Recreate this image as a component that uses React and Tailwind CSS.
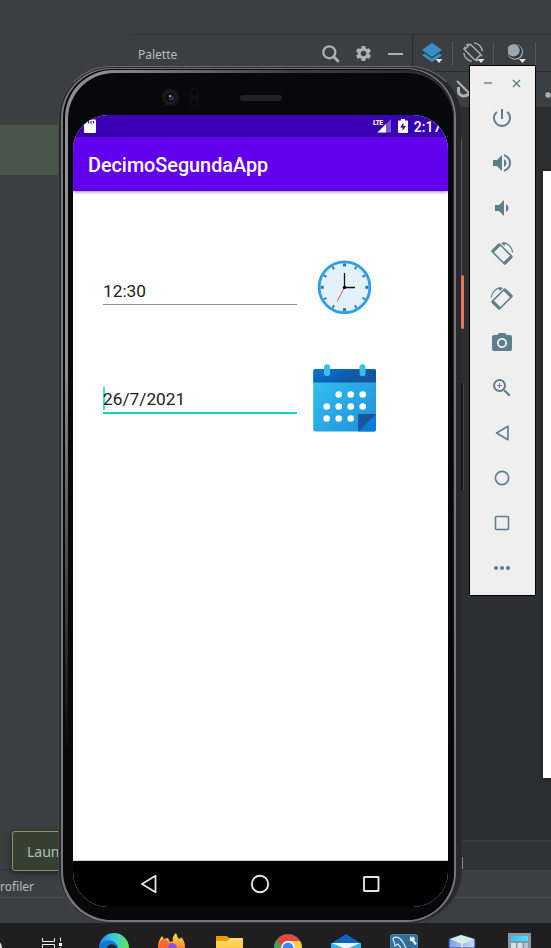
import { MdPowerSettingsNew, MdVolumeUp, MdVolumeDown, MdLocalSee, MdZoomIn, MdSettings } from "react-icons/md";

function Layers() {
  return (
    <svg width="24" height="24" viewBox="0 0 24 24">
      <path d="M10 1 20 8 10 15 0 8Z" fill="#3592c4" />
      <path d="M0 13 2.5 11.4 10 16.5 17.5 11.4 20 13 10 20Z" fill="#3592c4" />
      <path d="M13.5 17h7l-3.5 4z" fill="#e0e0e0" />
    </svg>
  );
}

function Rotate() {
  return (
    <svg width="22" height="24" viewBox="0 0 22 24" fill="none" stroke="#afb1b3" strokeWidth="1.4">
      <rect x="5.6" y="2.6" width="8" height="15" rx="1" transform="rotate(-45 9.6 10.1)" />
      <path d="M11 .9a9.4 9.4 0 0 1 8.4 8.2M.8 11a9.4 9.4 0 0 0 8 8.4" />
      <path d="M.8 7.6A9.5 9.5 0 0 1 6.5 1.4M12.7 19a9.5 9.5 0 0 0 3.3-2M18.8 12.6l-.8 1.8" strokeDasharray="3 1.5" />
      <path d="M14.5 17h7L18 21z" fill="#e0e0e0" stroke="none" />
    </svg>
  );
}

function Moon() {
  return (
    <svg width="22" height="24" viewBox="0 0 22 24">
      <circle cx="7.300" cy="10" r="7.800" fill="#9aa7b0" />
      <circle cx="6.800" cy="9.500" r="7" fill="#2f3335" />
      <circle cx="5.500" cy="8.400" r="6.200" fill="#9aa7b0" />
      <path d="M11 17h7l-3.500 4z" fill="#e0e0e0" />
    </svg>
  );
}

function Ide() {
  return (
    <div className="flex h-[923px] flex-col bg-[#3c3f41] font-['Noto_Sans','Open_Sans',sans-serif] text-xs text-[#bbbbbb]">
      <div className="flex h-[869px]">
        <div className="w-[132px] pt-[125px]">
          <div className="h-[50px] bg-[#49544a]" />
        </div>
        <div className="flex flex-1 flex-col pt-[34px]">
          <div className="flex h-[37px] border-t border-[#323232]">
            <div className="flex w-[280px] items-center pl-[6px] pt-px">
              <span className="w-[184px] pt-[2px]">Palette</span>
              <svg width="18" height="18" viewBox="0 0 18 18" fill="none" stroke="#afb1b3">
                <circle cx="7.300" cy="7.300" r="6" strokeWidth="2.300" />
                <path d="m11.500 11.500 5.200 5.200" strokeWidth="2.800" />
              </svg>
              <MdSettings className="ml-[14px] size-[19px] text-[#afb1b3]" />
              <div className="ml-[15px] h-[2px] w-[15px] bg-[#afb1b3]" />
            </div>
            <div className="flex flex-1 border-l border-[#2b2b2b] pl-[9px] pt-[7px]">
              <Layers />
              <div className="ml-[6px] h-6 w-px bg-[#555759]" />
              <div className="ml-[10px]"><Rotate /></div>
              <div className="ml-[8px] h-6 w-px bg-[#555759]" />
              <div className="ml-[14px]"><Moon /></div>
              <div className="ml-[5px] h-6 w-px bg-[#555759]" />
            </div>
          </div>
          <div className="flex flex-1">
            <div className="w-[280px]" />
            <div className="flex flex-1 flex-col border-l border-[#2b2b2b]">
              <div className="flex h-[37px] items-center justify-between border-b border-t border-[#2b2b2b] pl-[43px]">
                <svg width="18" height="20" viewBox="0 0 18 20" fill="none" stroke="#afb1b3">
                  <path d="M2.500 7v4c0 6.500 10 6.500 12 0V7" strokeWidth="3" />
                  <path d="M1 1l13 13" strokeWidth="2" />
                </svg>
                <svg width="6" height="16" viewBox="0 0 6 16"><circle cx="3" cy="13" r="2.700" fill="#afb1b3" /></svg>
              </div>
              <div className="flex h-[732px] justify-end bg-[#2d2e30] pt-[63px]">
                <div className="h-[607px] w-2 bg-white shadow-[0_0_3px_2px_#252628]" />
              </div>
              <div className="flex-1 border-t-2 border-[#3a3b3d] bg-[#313234]" />
            </div>
          </div>
        </div>
      </div>
      <div className="flex h-[29px] border-y border-t-[#323232] border-b-[#4b4d4f] pb-[2px] pt-2">
        <span className="leading-[18px]">rofiler</span>
      </div>
    </div>
  );
}

function Taskbar() {
  return (
    <div className="flex h-[25px] items-end overflow-hidden bg-[#1f1f1f]">
      <svg width="34" height="25" viewBox="0 0 34 25">
        <circle cx="-7" cy="25" r="9" fill="#ddd" />
      </svg>
      <svg width="42" height="25" viewBox="34 0 42 25" fill="none" stroke="#eee">
        <path d="M42.500 15v3.500h12V15M42.500 25v-3.500h12V25M60.500 14.500v4M60.500 24v1" />
        <path d="M59 20h3v3h-3z" fill="#fff" stroke="none" />
      </svg>
      <svg width="475" height="25" viewBox="76 0 475 25">
        <defs>
          <linearGradient id="edge"><stop stopColor="#1689dc" /><stop offset=".45" stopColor="#36c5e8" /><stop offset="1" stopColor="#66e84f" /></linearGradient>
          <linearGradient id="fox" x2="0" y2="1"><stop stopColor="#ffe14a" /><stop offset="1" stopColor="#ff8b2c" /></linearGradient>
          <linearGradient id="folder" x2="0" y2="1"><stop stopColor="#ffdb72" /><stop offset="1" stopColor="#ffcb45" /></linearGradient>
          <linearGradient id="cube"><stop stopColor="#7ea3dc" /><stop offset="1" stopColor="#ccd9f5" /></linearGradient>
          <linearGradient id="calc"><stop stopColor="#35c6ff" /><stop offset="1" stopColor="#50dcff" /></linearGradient>
        </defs>
        <circle cx="114" cy="25" r="15" fill="url(#edge)" />
        <path d="M99 25c2-9 15-11 19-1v1z" fill="#0f79d2" />
        <path d="M107 25c1-5 8-5 10 0z" fill="#16243a" />
        <path d="M158 25c0-5 1-8 4-12l2 3 4-1 2 4 3-1c-1-3 0-5 3-8l2 5 2 1 1-2c3 3 4 6 4 11z" fill="url(#fox)" />
        <path d="M158 25c1-5 3-9 6-9l6 4-3 5z" fill="#ff6537" />
        <path d="M168 25c0-7 8-6 9 0z" fill="#8f49ed" />
        <path d="M216 13h11l2 2h14v10h-27z" fill="#e6a100" />
        <path d="M216 18h11l3-3h13v10h-27z" fill="url(#folder)" />
        <circle cx="288" cy="25" r="14" fill="#db4b3f" />
        <path d="M274 25c0-3 1-6 3-8l5 8z" fill="#36a852" />
        <path d="M286 18h14c1 2 2 4 2 7h-10z" fill="#ffcd42" />
        <circle cx="288" cy="25" r="7" fill="#fff" />
        <circle cx="288" cy="25" r="5.500" fill="#4285f4" />
        <path d="M331 20.500 346 11l15 9.500V25h-30z" fill="#0f65bd" />
        <path d="M331 20h30v5h-30z" fill="#32b4ee" />
        <path d="M332 20h28l-11 5h-6z" fill="#f3f6f9" />
        <rect x="390.500" y="11.500" width="27" height="18" rx="2" fill="#326f98" stroke="#4380a8" />
        <path d="M393 15c6-3 10 3 13 10M393 15c0 4 2 4 2 8l3-2 3 4" fill="none" stroke="#d9eef8" strokeWidth="1.200" />
        <path d="m410 13 2 2 1-2 2 3-1 1 3 4-2 1-3-4-2 0z" fill="#e8f4fa" />
        <path d="m449 16 12-4 14 4v9h-26z" fill="url(#cube)" stroke="#283c9b" strokeWidth="1.200" />
        <path d="m450 16 11-4 13 4-12 5z" fill="#d7ece4" />
        <path d="M462 21v4" stroke="#f3f9ff" />
        <path d="M508 10h23v15h-23z" fill="#8997a3" />
        <path d="M511 13h17v5h-17z" fill="url(#calc)" />
        <path d="M511 20h5v5h-5zM517.500 20h5v5h-5z" fill="#d5dfe6" />
        <path d="M524 20h4v5h-4z" fill="#b3c2cc" />
      </svg>
    </div>
  );
}

function Clock() {
  const ticks = [0, 30, 60, 90, 120, 150, 180, 210, 240, 270, 300, 330];
  return (
    <svg width="54" height="54" viewBox="0 0 54 54">
      <circle cx="27.500" cy="27.300" r="25.400" fill="#e3f1fd" stroke="#2e9fe6" strokeWidth="2.800" />
      {ticks.map((a) => (
        <path key={a} d="M27.500 3.500v3" stroke="#2979ad" strokeWidth={a % 90 ? 1.8 : 3} transform={`rotate(${a} 27.5 27.3)`} />
      ))}
      <path d="M27.500 27.300 20 41.500" stroke="#d9534f" strokeWidth="1" />
      <path d="M27.500 13v14.500H38" fill="none" stroke="#111" strokeWidth="1.300" />
      <circle cx="27.500" cy="27.400" r="1.700" fill="#000" />
    </svg>
  );
}

function Calendar() {
  const dots = [[26, 31], [38, 31], [50, 31], [14, 43], [26, 43], [38, 43], [50, 43], [14, 55], [26, 55], [38, 55]];
  return (
    <svg width="64" height="68" viewBox="0 0.5 64 68">
      <defs>
        <linearGradient id="calBody" x2="1" y2="1"><stop stopColor="#36c4f3" /><stop offset="1" stopColor="#1d8fd9" /></linearGradient>
        <linearGradient id="calTop" x2="1" y2=".4"><stop stopColor="#0676cf" /><stop offset=".6" stopColor="#0c5eae" /><stop offset="1" stopColor="#19559a" /></linearGradient>
      </defs>
      <rect x=".200" y="5.500" width="62.800" height="62.500" rx="2" fill="url(#calBody)" />
      <path d="M.200 19V7.500a2 2 0 0 1 2-2H61a2 2 0 0 1 2 2V19z" fill="url(#calTop)" />
      <rect x="11" y=".700" width="6" height="12" rx="3" fill="#35bff0" />
      <rect x="46.500" y=".700" width="6" height="12" rx="3" fill="#35bff0" />
      {dots.map(([x, y]) => <circle key={`${x}-${y}`} cx={x - 0.3} cy={y} r="3.300" fill="#fff" />)}
      <path d="M45.300 50.500H63V66a2 2 0 0 1-2 2H45.300z" fill="#0c7bd8" />
      <path d="M45.300 50.500H63L45.300 68z" fill="#17559a" />
    </svg>
  );
}

function StatusBar() {
  return (
    <div className="flex h-[22px] items-center bg-[#3a00b3] pl-[11px] text-white">
      <svg width="12" height="14" viewBox="0 0 12 14">
        <path d="M4 .500h7a1 1 0 0 1 1 1V13a1 1 0 0 1-1 1H1a1 1 0 0 1-1-1V4.500z" fill="#fff" />
        <path d="M4.500 2v2.500M7 2v2.500M9.500 2v2.500" stroke="#3a00b3" strokeWidth="1.200" />
      </svg>
      <span className="ml-[277px] self-start pt-[4px] text-[7px] font-bold leading-[8px] tracking-[-0.5px]">LTE</span>
      <svg className="-ml-[6px]" width="14" height="14" viewBox="0 0 14 14">
        <path d="M14 0v13.500H.500z" fill="#7c56cd" />
        <path d="M9 5v8.500H.500z" fill="#fff" />
      </svg>
      <svg className="ml-[7px]" width="10" height="14" viewBox="0 0 10 14">
        <path d="M3 0h4v1.500h2.200a.800.800 0 0 1 .8.800v11a.700.700 0 0 1-.7.700H.700a.700.700 0 0 1-.7-.7v-11a.800.800 0 0 1 .8-.8H3z" fill="#fff" />
        <path d="M5.500 3.500 2.200 8.500h2.300V12l3.300-5H5.500z" fill="#3a00b3" />
      </svg>
      <span className="ml-[6px] whitespace-nowrap pt-px text-[14px] font-medium leading-none">2:17</span>
    </div>
  );
}

function Screen() {
  return (
    <div className="flex h-[792px] w-[375px] flex-col overflow-hidden rounded-t-[35px] rounded-b-[35px] bg-white font-[Roboto,sans-serif]">
      <StatusBar />
      <div className="z-10 flex h-[54px] items-center bg-[#6200ee] pl-[15px] pt-[4px] text-[19.8px] font-medium text-white shadow-[0_1px_3px_rgba(0,0,0,0.45)]">
        DecimoSegundaApp
      </div>
      <div className="flex h-[670px] flex-col border-b border-[#ccc] pl-[30px] text-[17.3px] text-[#212121]">
        <div className="mt-[69px] flex h-[54px]">
          <div className="flex h-[45px] w-[194px] items-end border-b border-[#8f8f8f] pb-[3px] leading-[20px]">12:30</div>
          <div className="ml-[20px]"><Clock /></div>
        </div>
        <div className="mt-[50px] flex h-[68px]">
          <div className="flex h-[50px] w-[194px] items-end border-b-2 border-[#14d0be] pb-[2px]">
            <div className="-mr-[2px] h-[23px] w-[2px] bg-[#3fdccd]" />
            <span className="h-[22px] leading-[23px]">26/7/2021</span>
          </div>
          <div className="ml-[16px]"><Calendar /></div>
        </div>
      </div>
      <div className="flex flex-1 items-center justify-center gap-[91px] bg-black pr-[2px]">
        <svg width="20" height="20" viewBox="0 0 20 20" fill="none" stroke="#e6e6e6" strokeWidth="1.800"><path d="M16.500 1.800v16.400L3 10z" strokeLinejoin="round" /></svg>
        <svg width="20" height="20" viewBox="0 0 20 20" fill="none" stroke="#e6e6e6" strokeWidth="1.900"><circle cx="10" cy="10" r="8.200" /></svg>
        <svg width="20" height="20" viewBox="0 0 20 20" fill="none" stroke="#e6e6e6" strokeWidth="1.900"><rect x="3" y="3" width="14.500" height="14" rx=".500" /></svg>
      </div>
    </div>
  );
}

function Phone() {
  return (
    <div className="absolute left-[58px] top-[66px]">
      <div className="h-[857px] w-[404px] rounded-[53px] border border-b-[#333335] border-l-[#48484a] border-r-[#2e2e30] border-t-[#6a6a6c] bg-[#29292b] pl-[2px] pr-[5px] pt-px">
        <div className="h-full rounded-[50px] bg-[#77777a] pb-[2px] pl-[2px] pr-[2px] pt-px">
          <div className="h-full rounded-[49px] bg-[#08080a] pl-[2px] pt-px">
            <div className="h-full rounded-[48px] bg-[linear-gradient(to_bottom,transparent_35%,#08080a_80%),linear-gradient(to_right,#909090_0%,#8a8a8a_12%,#3c3c3e_60%,#2a2a2c_100%)] pl-[3px] pr-px pt-[3px]">
              <div className="flex h-full flex-col rounded-[46px] bg-[#08080a] pl-[5px]">
                <div className="flex h-[42px] items-center pl-[87px] pt-[5px]">
                  <svg width="40" height="22" viewBox="0 0 40 22">
                    <circle cx="10.500" cy="11.500" r="9.500" fill="#121213" />
                    <circle cx="10.500" cy="11.500" r="7" fill="#1e1e1f" />
                    <circle cx="10.500" cy="11.500" r="5" fill="#0c0c12" />
                    <circle cx="11.500" cy="12" r="2.800" fill="#292d4c" />
                    <circle cx="10" cy="10" r="1" fill="#bcbcc7" />
                    <rect x="30" y="1.500" width="9" height="20" rx="4.500" fill="#101011" />
                    <circle cx="34.500" cy="6.500" r="3" fill="#09090a" />
                    <circle cx="34.500" cy="16.500" r="3" fill="#09090a" />
                  </svg>
                  <div className="ml-[40px] mt-[2px] h-[6px] w-[42px] rounded-full bg-[#202020]" />
                </div>
                <Screen />
              </div>
            </div>
          </div>
        </div>
      </div>
      <div className="absolute left-[403px] top-[209px] h-[54px] w-[3px] rounded-sm bg-[#e67560]" />
      <div className="absolute left-[403px] top-[317px] h-[107px] w-[3px] border-r border-[#4a4a4b] bg-[#161617]" />
      <div className="absolute left-[403px] top-[73px] h-[136px] w-px bg-[#58595a]" />
      <div className="absolute left-[404px] top-[791px] h-[12px] w-px bg-[#858585]" />
    </div>
  );
}

function TurnDevice({ flip }) {
  return (
    <svg className={flip ? "-scale-x-100" : ""} width="24" height="24" viewBox="0 0 24 24" fill="#607d8b">
      <path
        fillRule="evenodd"
        transform="rotate(-45 12 13)"
        d="M7.500 3h9A1.500 1.500 0 0 1 18 4.500v17a1.500 1.500 0 0 1-1.500 1.500h-9A1.500 1.500 0 0 1 6 21.500v-17A1.500 1.500 0 0 1 7.500 3zm0 3.200v13.600h9V6.200z"
      />
      <path d="M12 2.300c5.500-1 10 3.500 10.700 9.200" fill="none" stroke="#607d8b" strokeWidth="1.300" />
      <path d="M11 2.300l4.500-1.200-1 3.900z" />
    </svg>
  );
}

function EmulatorToolbar() {
  const line = { width: 20, height: 20, viewBox: "0 0 20 20", fill: "none", stroke: "#607d8b", strokeWidth: 1.6 };
  const tools = [
    <MdPowerSettingsNew key="power" size={24} />,
    <MdVolumeUp key="up" size={24} />,
    <MdVolumeDown key="down" size={24} />,
    <TurnDevice key="left" />,
    <TurnDevice key="right" flip />,
    <MdLocalSee key="camera" size={24} />,
    <MdZoomIn key="zoom" size={24} />,
    <svg key="back" {...line}><path d="M16 3.200v13.600L4.500 10z" strokeLinejoin="round" /></svg>,
    <svg key="home" {...line}><circle cx="10" cy="10" r="6.600" /></svg>,
    <svg key="overview" {...line}><rect x="3.500" y="3.500" width="13" height="13" rx="1" /></svg>,
    <svg key="more" width="20" height="20" viewBox="0 0 20 20" fill="#607d8b"><circle cx="4" cy="10" r="2" /><circle cx="10" cy="10" r="2" /><circle cx="16" cy="10" r="2" /></svg>,
  ];
  return (
    <div className="absolute left-[469px] top-[65px] flex h-[531px] w-[67px] flex-col border border-black bg-[#efefef] text-[#607d8b]">
      <div className="flex h-[29px] items-center gap-[20px] pl-[14px] pt-[5px]">
        <div className="h-[2px] w-[8px] bg-[#91a4ae]" />
        <svg width="9" height="9" viewBox="0 0 9 9" stroke="#607d8b" strokeWidth="1.400"><path d="m1 1 7 7M8 1 1 8" /></svg>
      </div>
      {tools.map((tool, i) => (
        <div key={i} className="flex h-[45px] items-center justify-center pr-px">{tool}</div>
      ))}
    </div>
  );
}

export default function App() {
  return (
    <div className="relative h-[948px] w-[551px] overflow-hidden bg-[#3c3f41]">
      <Ide />
      <Taskbar />
      <div className="absolute left-[12px] top-[831px] flex h-10 w-[70px] items-center rounded-[3px] border border-[#82986f] bg-[#354030] pl-[14px] pt-px font-['Noto_Sans',sans-serif] text-sm text-[#bbbbbb] shadow-[0_2px_6px_rgba(0,0,0,0.5)]">
        Launch
      </div>
      <Phone />
      <EmulatorToolbar />
    </div>
  );
}
